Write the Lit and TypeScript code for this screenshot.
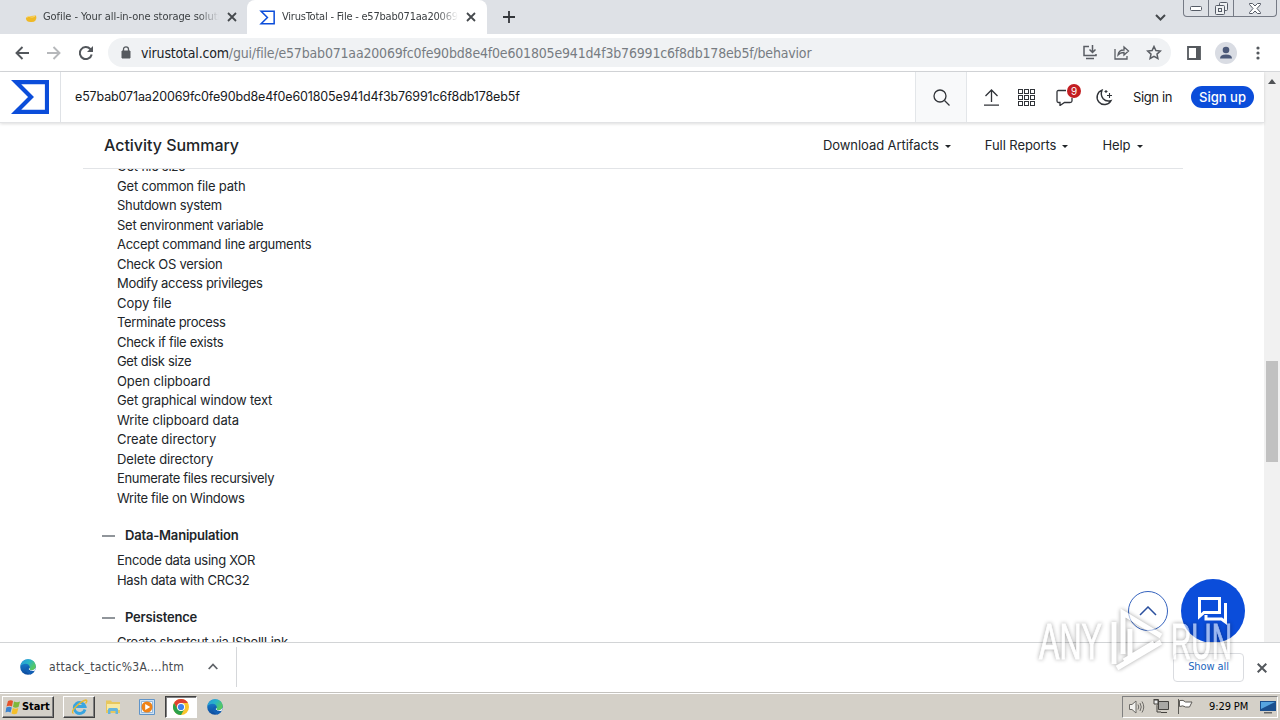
import { LitElement, css, html, svg } from 'lit';
import { customElement } from 'lit/decorators.js';

const HASH = 'e57bab071aa20069fc0fe90bd8e4f0e601805e941d4f3b76991c6f8db178eb5f';

// [label, letter spacing in px]
const CAPABILITIES: [string, number][] = [
    ['Get file size', -0.3],
    ['Get common file path', -0.18],
    ['Shutdown system', -0.3],
    ['Set environment variable', -0.27],
    ['Accept command line arguments', -0.28],
    ['Check OS version', -0.28],
    ['Modify access privileges', -0.33],
    ['Copy file', 0],
    ['Terminate process', -0.32],
    ['Check if file exists', -0.3],
    ['Get disk size', -0.33],
    ['Open clipboard', -0.07],
    ['Get graphical window text', -0.2],
    ['Write clipboard data', -0.1],
    ['Create directory', -0.03],
    ['Delete directory', -0.13],
    ['Enumerate files recursively', -0.34],
    ['Write file on Windows', -0.31],
];

const edgeIcon = (size: number) => html`
    <svg width=${size} height=${size} viewBox="0 0 16 16">
        <defs>
            <linearGradient id="eg" x1="0" y1="0" x2="1" y2=".6"><stop offset="0" stop-color="#2a96dc"/><stop offset=".5" stop-color="#28b4c8"/><stop offset="1" stop-color="#5acb58"/></linearGradient>
            <linearGradient id="eb" x1="0" y1="0" x2="0" y2="1"><stop offset="0" stop-color="#1b8ad8"/><stop offset="1" stop-color="#0d4a9c"/></linearGradient>
        </defs>
        <circle cx="8" cy="8" r="7.8" fill="url(#eb)"/>
        <path d="M.4 7.4C1 3 4.200 .2 8.200 .2c4.400 0 7.500 3.200 7.500 6.700 0 2.600-2 4.200-4.200 4.200-1.900 0-2.700-.6-2.700-1.100 0-.5.9-.8.9-2.200 0-1.500-1.600-3-4-3C3.300 4.800 1.300 5.700.4 7.400z" fill="url(#eg)"/>
        <path d="M8.800 10c.2 1 1.500 1.900 3 1.900 1.400 0 2.500-.5 3.100-.9-1.200 2.600-3 4-4.400 4.400-3-.6-4.800-3-4.500-5.600.2-1.300 1-2.200 2-2.600 1 .2 1.500.9 1.500 1.500 0 .6-.7.800-.7 1.300z" fill="#125fb4"/>
        <path d="M15.600 8.500c-.6 1.600-2.200 2.700-4.100 2.700-1.900 0-2.700-.6-2.700-1.100 0-.3.400-.6.600-1.100l1 2.700 3.900.4c.7-.8 1.200-2 1.300-3.600z" fill="#fff"/>
    </svg>`;

const vtIcon = (w: number, h: number, stroke: number) => html`
    <svg width=${w} height=${h} viewBox="0 0 38 34" fill="none" stroke="#0b4dda" stroke-width=${stroke}>
        <path d="M5 2.100h31v29.800H5L20 17z"/>
    </svg>`;

@customElement('vt-tabs')
class VtTabs extends LitElement {
    static styles = css`
        :host { display: flex; height: 34px; background: #dee1e6; font: 11px/34px 'DejaVu Sans Condensed', 'DejaVu Sans', sans-serif; color: #3c4043; }
        .tab { display: flex; align-items: center; width: 247px; box-sizing: border-box; padding: 0 10px 0 22px; }
        .active { width: 240px; padding: 0 9px 0 12px; background: #fff; border-radius: 8px 8px 0 0; }
        .title { width: 176px; margin: 0 8px 0 5px; overflow: hidden; white-space: nowrap; letter-spacing: -.07px; mask-image: linear-gradient(90deg, #000 155px, transparent 176px); }
        .active .title { margin-left: 7px; letter-spacing: -.22px; }
        svg { flex: none; display: block; }
        .plus { margin: 11px 0 0 16px; }
        .chevron { margin: 14px 17px 0 auto; }
        .controls { display: flex; height: 16px; margin-right: 3px; border: 1px solid #757a85; border-top: 0; border-radius: 0 0 4px 4px; }
        .controls span { display: grid; place-items: center; width: 24px; border-right: 1px solid #757a85; }
        .controls span:last-child { width: 42px; border: 0; }
    `;

    render() {
        const close = html`<svg width="10" height="10" viewBox="0 0 10 10" stroke="#45494d" stroke-width="1.800"><path d="M1 1l8 8M9 1l-8 8"/></svg>`;
        return html`
            <div class="tab">
                <svg width="16" height="16" viewBox="0 0 16 16"><path d="M4 10q-.500-2 2-2 .500-1.500 3-1l5-.500q1 2-.500 5-1.500 2-5 1.500-4 0-4.500-3" fill="#efb927"/><path d="M5 8q2-1.500 4 0 2 .500 4-1" fill="none" stroke="#f8d778"/></svg>
                <span class="title">Gofile - Your all-in-one storage solution</span>${close}
            </div>
            <div class="tab active">${vtIcon(16, 15, 3.6)}<span class="title">VirusTotal - File - ${HASH}</span>${close}</div>
            <svg class="plus" width="12" height="12" viewBox="0 0 12 12" stroke="#33363a" stroke-width="1.800"><path d="M6 0v12M0 6h12"/></svg>
            <svg class="chevron" width="11" height="7" viewBox="0 0 11 7" fill="none" stroke="#45494d" stroke-width="2"><path d="M1 1l4.500 4.500L10 1"/></svg>
            <div class="controls">
                <span><svg width="12" height="5" viewBox="0 0 12 5" fill="#fff" stroke="#555b66"><rect x=".5" y=".5" width="11" height="4" rx="1"/></svg></span>
                <span><svg width="13" height="13" viewBox="0 0 13 13" fill="#eef0f2" stroke="#555b66"><rect x="4.500" y=".5" width="8" height="8" rx="1"/><rect x=".5" y="3.500" width="9" height="9" rx="1"/><rect x="3.500" y="6.500" width="3" height="3"/></svg></span>
                <span><svg width="12" height="11" viewBox="0 0 12 11" fill="#fff" stroke="#555b66"><path d="M.5.500h3L6 3l2.500-2.500h3v1L8 5.500l3.500 4v1h-3L6 8l-2.500 2.500h-3v-1L4 5.500.500 1.500z"/></svg></span>
            </div>`;
    }
}

@customElement('vt-toolbar')
class VtToolbar extends LitElement {
    static styles = css`
        :host { display: flex; align-items: center; height: 37px; border-bottom: 1px solid #d5d7da; background: #fff; font: 14px/28px 'DejaVu Sans Condensed', 'DejaVu Sans', sans-serif; color: #777c82; }
        svg { display: block; flex: none; }
        .nav { display: flex; gap: 18px; padding: 0 15px 0 15px; }
        .url { display: flex; align-items: center; box-sizing: border-box; width: 1063px; height: 29px; padding: 0 9px 0 13px; border-radius: 15px; background: #f0f2f4; }
        .address { margin: 0 auto 0 10px; white-space: nowrap; letter-spacing: -.18px; }
        b { font-weight: normal; color: #202327; }
        .actions { display: flex; gap: 16px; }
        .panel { margin-left: 16px; }
        .avatar { margin-left: 14px; }
        .dots { margin-left: 19px; }
    `;

    render() {
        return html`
            <div class="nav">
                <svg width="14" height="14" viewBox="0 0 14 14" fill="none" stroke="#53575c" stroke-width="1.900"><path d="M14 7H1.500M7.500 1L1.500 7l6 6"/></svg>
                <svg width="14" height="14" viewBox="0 0 14 14" fill="none" stroke="#b6b8bb" stroke-width="1.900"><path d="M0 7h12.500M6.500 1l6 6-6 6"/></svg>
                <svg width="14" height="14" viewBox="0 0 14 14" fill="none" stroke="#53575c" stroke-width="2"><path d="M12.700 8.500A6 6 0 1 1 11.300 3L13 4.800"/><path d="M14 0v6H8z" fill="#53575c" stroke="none"/></svg>
            </div>
            <div class="url">
                <svg width="10" height="13" viewBox="0 0 10 13"><path d="M1 5h8v7H1z" fill="#565a5f" stroke="#565a5f"/><path d="M2.500 5V3.300a2.500 2.500 0 0 1 5 0V5" fill="none" stroke="#565a5f" stroke-width="1.300"/></svg>
                <span class="address"><b>virustotal.com</b>/gui/file/${HASH}/behavior</span>
                <div class="actions">
                    <svg width="16" height="15" viewBox="0 0 16 15" fill="none" stroke="#5a5e64" stroke-width="1.500"><path d="M7 1.500H2v9h12V9M4 13.500h8M10.500 0v7M7.500 4.500l3 3 3-3"/></svg>
                    <svg width="16" height="15" viewBox="0 0 16 15" fill="none" stroke="#5a5e64" stroke-width="1.300"><path d="M1 4v10h12v-3M4 10q.500-5 6-5V2l4.500 4L10 10V7.500q-4 0-6 2.500z"/></svg>
                    <svg width="16" height="15" viewBox="0 0 16 15" fill="none" stroke="#5a5e64" stroke-width="1.500"><path d="M8 1.500l1.900 4.100 4.400.500-3.300 3 .9 4.400L8 11.300l-3.900 2.200.9-4.400-3.300-3 4.400-.500z"/></svg>
                </div>
            </div>
            <svg class="panel" width="14" height="14" viewBox="0 0 14 14"><path d="M1 1h12v12H1z" fill="none" stroke="#55595e" stroke-width="1.800"/><path d="M9 1h4v12H9z" fill="#55595e"/></svg>
            <svg class="avatar" width="22" height="22" viewBox="0 0 22 22"><circle cx="11" cy="11" r="11" fill="#d9dce3"/><circle cx="11" cy="8" r="3.300" fill="#4b5878"/><path d="M5 16.500q0-4 6-4t6 4z" fill="#4b5878"/></svg>
            <svg class="dots" width="4" height="14" viewBox="0 0 4 14" fill="#55595e"><circle cx="2" cy="2" r="1.600"/><circle cx="2" cy="7" r="1.600"/><circle cx="2" cy="12" r="1.600"/></svg>`;
    }
}

@customElement('vt-header')
class VtHeader extends LitElement {
    static styles = css`
        :host { display: flex; align-items: center; height: 50px; background: #fff; border-bottom: 1px solid #e2e3e5; box-shadow: 0 1px 3px #0002; font: 13px/20px Inter, sans-serif; color: #17191c; position: relative; }
        svg { display: block; flex: none; }
        .logo { display: grid; place-items: center; width: 60px; height: 50px; border-right: 1px solid #dfe2e6; }
        .query { flex: 1; padding-left: 14px; font-size: 12.500px; letter-spacing: -.14px; }
        .search { display: grid; place-items: center; width: 50px; height: 50px; border: 1px solid #e3e6e9; border-width: 0 1px; background: #f8f9fa; }
        .icons { display: flex; align-items: center; gap: 21px; padding-left: 17px; }
        .upload { margin-right: -2px; }
        .comments { position: relative; }
        .badge { position: absolute; left: 11px; top: -5px; width: 14px; height: 14px; border-radius: 50%; background: #c31e22; color: #fff; font-size: 10px; line-height: 14px; text-align: center; }
        .signin { margin-left: 20px; letter-spacing: -.38px; white-space: nowrap; }
        .signup { width: 63px; height: 22px; margin: 0 10px 0 19px; border-radius: 11px; background: #0b4dda; color: #fff; line-height: 22px; text-align: center; font-weight: 500; }
    `;

    render() {
        const cells = [0.5, 6.5, 12.5];
        return html`
            <div class="logo">${vtIcon(38, 34, 4.2)}</div>
            <div class="query">${HASH}</div>
            <div class="search"><svg width="17" height="17" viewBox="0 0 17 17" fill="none" stroke="#303338" stroke-width="1.300"><circle cx="7" cy="7" r="6"/><path d="M11.500 11.500l5 5"/></svg></div>
            <div class="icons">
                <svg class="upload" width="15" height="17" viewBox="0 0 15 17" fill="none" stroke="#303338" stroke-width="1.300"><path d="M7.500 13V1M1.500 7l6-6 6 6M0 16.200h15"/></svg>
                <svg width="17" height="17" viewBox="0 0 17 17" fill="none" stroke="#303338">
                    ${cells.map(y => cells.map(x => svg`<rect x=${x} y=${y} width="4" height="4"/>`))}
                </svg>
                <div class="comments">
                    <svg width="18" height="17" viewBox="0 0 18 17" fill="none" stroke="#303338" stroke-width="1.300"><path d="M10 1.500H2.500q-1.500 0-1.500 1.500v9q0 1.500 1.500 1.500H4v3l4.500-3H14q2 0 2-1.500V9"/></svg>
                    <span class="badge">9</span>
                </div>
                <svg width="18" height="17" viewBox="0 0 18 17" fill="none" stroke="#303338" stroke-width="1.400"><path d="M7 1.200a7.400 7.400 0 1 0 9 10.500Q11 13 8.200 9.800 5.200 6 7 1.200z"/><path d="M14.500 4v5M12 6.500h5M11 1v3M9.500 2.500h3" stroke-width="1.100"/></svg>
            </div>
            <span class="signin">Sign in</span>
            <span class="signup">Sign up</span>`;
    }
}

@customElement('vt-activity')
class VtActivity extends LitElement {
    static styles = css`
        :host { display: block; height: 519px; overflow: hidden; background: #fff; font: 13px/19.500px Inter, sans-serif; color: #212529; }
        .bar { display: flex; align-items: center; height: 46px; box-sizing: border-box; width: 1100px; margin-left: 83px; padding: 1px 0 0 21px; border-bottom: 1px solid #e2e4e7; letter-spacing: -.07px; }
        .bar h2 { width: 719px; margin: 0; font-size: 16px; font-weight: 500; white-space: nowrap; letter-spacing: -.03px; }
        .item { display: flex; align-items: center; margin-right: 34px; gap: 6px; white-space: nowrap; }
        .item::after { content: ''; border: 3px solid transparent; border-top-color: currentColor; border-bottom: 0; }
        .body { height: 473px; overflow: hidden; }
        .list { margin-top: -12px; }
        .row { padding-left: 117px; height: 19.500px; white-space: nowrap; }
        .head { display: flex; align-items: center; gap: 10px; height: 20px; margin: 17.750px 0 5.250px 102px; font-weight: 600; letter-spacing: -.19px; }
        .head::before { content: ''; width: 13px; height: 2px; background: #90959a; }
    `;

    row([label, spacing]: [string, number]) {
        return html`<div class="row" style="letter-spacing: ${spacing}px">${label}</div>`;
    }

    render() {
        return html`
            <div class="bar">
                <h2>Activity Summary</h2>
                <span class="item">Download Artifacts</span>
                <span class="item">Full Reports</span>
                <span class="item">Help</span>
            </div>
            <div class="body">
                <div class="list">${CAPABILITIES.map(c => this.row(c))}</div>
                <div class="head">Data-Manipulation</div>
                ${this.row(['Encode data using XOR', -0.29])}
                ${this.row(['Hash data with CRC32', -0.3])}
                <div class="head">Persistence</div>
                ${this.row(['Create shortcut via IShellLink', -0.28])}
            </div>`;
    }
}

@customElement('vt-downloads')
class VtDownloads extends LitElement {
    static styles = css`
        :host { display: flex; align-items: center; height: 49px; border-top: 1px solid #d2d4d6; background: #fff; font: 12px/20px 'DejaVu Sans Condensed', 'DejaVu Sans', sans-serif; color: #45494d; }
        svg { display: block; flex: none; }
        .file { display: flex; align-items: center; width: 216px; height: 40px; margin-top: -2px; padding-left: 20px; border-right: 1px solid #d5d7da; }
        .name { width: 147px; margin: 0 12px 0 13px; white-space: nowrap; letter-spacing: .27px; }
        .all { width: 69px; height: 27px; margin: 0 13px 0 auto; border: 1px solid #dadce0; border-radius: 4px; color: #2266bd; font-size: 11px; line-height: 25px; text-align: center; letter-spacing: -.1px; }
        .close { margin-right: 13px; }
    `;

    render() {
        return html`
            <div class="file">
                ${edgeIcon(16)}
                <span class="name">attack_tactic%3A....htm</span>
                <svg width="10" height="7" viewBox="0 0 10 7" fill="none" stroke="#5f6368" stroke-width="1.800"><path d="M.7 6L5 1.500 9.300 6"/></svg>
            </div>
            <div class="all">Show all</div>
            <svg class="close" width="10" height="10" viewBox="0 0 10 10" stroke="#53575c" stroke-width="2"><path d="M.7.700l8.600 8.600M9.300.700L.700 9.300"/></svg>`;
    }
}

@customElement('vt-taskbar')
class VtTaskbar extends LitElement {
    static styles = css`
        :host { display: flex; align-items: center; height: 28px; box-sizing: border-box; padding: 1px 2px 1px; background: #d4d0c8; border-top: 1px solid #c4c2be; box-shadow: inset 0 1px #fff; font: 11px/20px 'DejaVu Sans Condensed', 'DejaVu Sans', sans-serif; color: #000; }
        svg { display: block; flex: none; }
        .start, .raised { border: 1px solid; border-color: #fff #404040 #404040 #fff; box-shadow: inset -1px -1px #808080; }
        .start { display: flex; align-items: center; gap: 1px; box-sizing: border-box; width: 52px; height: 22px; padding-left: 2px; font-weight: bold; letter-spacing: -.1px; }
        .app { display: grid; place-items: center; box-sizing: border-box; width: 32px; height: 22px; margin-right: 2px; }
        .raised { margin-left: 9px; }
        .pressed { border: 1px solid; border-color: #404040 #fff #fff #404040; box-shadow: inset 1px 1px #808080; background: #fff; }
        .tray { display: flex; align-items: center; box-sizing: border-box; width: 156px; height: 22px; margin-left: auto; padding: 0 1px 0 6px; border: 1px solid; border-color: #808080 #fff #fff #808080; }
        .tray svg { margin-right: 8px; }
        .clock { width: 43px; margin-left: 8px; margin-right: 8px; white-space: nowrap; letter-spacing: -.1px; }
        .tray svg.desk { margin: 0; }
    `;

    render() {
        return html`
            <div class="start">
                <svg width="16" height="16" viewBox="0 0 16 16"><path d="M3 2q3-1.500 5 0L7 7.500Q4.500 6 1.500 7.500z" fill="#e5522a"/><path d="M9 2.500q3 1.500 6 0l-1.500 5.500q-3 1.500-5.500 0z" fill="#7fb73b"/><path d="M1.300 8.500q3-1.500 5.500 0L5.500 13.500q-2.500-1.500-5 0z" fill="#3b83cf"/><path d="M7.800 9q3 1.500 5.500 0L12 14.500q-3 1.500-5.500 0z" fill="#f5bf29"/></svg>
                Start
            </div>
            <div class="app raised"><svg width="17" height="17" viewBox="0 0 17 17" fill="none"><path d="M14 11.500A5.500 5.500 0 1 1 14 8.500H5" stroke="#3aa5e0" stroke-width="2.800"/><path d="M2.500 15.500Q-.5 14 5 8.500T15 2q2 .500-.500 3.500" stroke="#eab92c" stroke-width="1.300"/></svg></div>
            <div class="app"><svg width="16" height="16" viewBox="0 0 16 16"><path d="M1 3V1.500h5L7 3h8v11H1z" fill="#e7c75e"/><path d="M2 5h13v6H2z" fill="#f8e9a2"/><path d="M3 15v-4.500q0-1.500 1.500-1.500h7q1.500 0 1.500 1.500V15h-2.500v-3h-5v3z" fill="#65b5dd"/></svg></div>
            <div class="app"><svg width="16" height="16" viewBox="0 0 16 16"><path d="M.5.500h15v15H.500z" fill="#cfe2f3" stroke="#5f94c9"/><path d="M2.500 2.500h11v11h-11z" fill="#f8fbfd" stroke="#93b7da"/><circle cx="8" cy="8" r="5.500" fill="#ef8318"/><path d="M6.200 5v6l5-3z" fill="#fff"/></svg></div>
            <div class="app pressed"><svg width="16" height="16" viewBox="0 0 16 16"><circle cx="8" cy="8" r="8" fill="#fbc52d"/><path d="M1.070 4A8 8 0 0 1 14.930 4H8L4.540 10z" fill="#df4132"/><path d="M1.070 4A8 8 0 0 0 8 16L11.460 10 8 12 4.540 10z" fill="#2ba14b"/><circle cx="8" cy="8" r="4" fill="#fff"/><circle cx="8" cy="8" r="3.100" fill="#4082ec"/></svg></div>
            <div class="app">${edgeIcon(16)}</div>
            <div class="tray">
                <svg width="16" height="14" viewBox="0 0 16 14" fill="#f2f1ee" stroke="#6d6b67"><path d="M.5 4.500H3L7 1v12L3 9.500H.500z"/><path d="M9 4.500q1.500 2.500 0 5M11 3q2.500 4 0 8M13 1.500q3.500 5.500 0 11" fill="none"/></svg>
                <svg width="16" height="15" viewBox="0 0 16 15" fill="#a9a8a4" stroke="#45433f"><path d="M5.500 2.500h10v8h-10zM8 13.500h6"/><path d="M.5.500h5V5L4 6.500V13h4" fill="none"/><path d="M1 1h4v4H1z" fill="#eee"/></svg>
                <svg width="16" height="15" viewBox="0 0 16 15" fill="#fff" stroke="#5d5b57"><path d="M1.500 0v15" /><path d="M2.500 1.500q4-1 6 1.500h6.500l-2.500 5H8.500Q6 6 2.500 7.500z"/></svg>
                <span class="clock">9:29 PM</span>
                <svg class="desk" width="16" height="14" viewBox="0 0 16 14"><path d="M0 1h16v10H0z" fill="#1b4f8e"/><path d="M1 2h14L1 9z" fill="#57a4df"/><path d="M4 12h8v1.500H4z" fill="#666"/></svg>
            </div>`;
    }
}

@customElement('app-root')
class AppRoot extends LitElement {
    static styles = css`
        :host { display: flex; flex-direction: column; position: relative; width: 1280px; height: 720px; overflow: hidden; background: #fff; }
        .page { display: flex; height: 570px; }
        .content { width: 1264px; }
        .scroll { display: flex; flex-direction: column; align-items: center; width: 16px; background: #f1f1f1; }
        .arrow { margin-top: 7px; border: 4px solid transparent; border-top: 0; border-bottom: 5px solid #505356; }
        .thumb { width: 12px; height: 101px; margin-top: 277px; background: #c1c1c1; }
        .top, .chat { position: absolute; display: grid; place-items: center; border-radius: 50%; }
        .top { left: 1128px; top: 591px; width: 38px; height: 38px; border: 1px solid #3563be; background: #fff; }
        .chat { left: 1181px; top: 579px; width: 64px; height: 64px; background: #0b4dda; clip-path: inset(0 0 1px 0); }
        .mark { position: absolute; left: 1030px; top: 600px; filter: drop-shadow(0 0 2px #0009); opacity: .6; pointer-events: none; }
    `;

    render() {
        return html`
            <vt-tabs></vt-tabs>
            <vt-toolbar></vt-toolbar>
            <div class="page">
                <div class="content"><vt-header></vt-header><vt-activity></vt-activity></div>
                <div class="scroll"><div class="arrow"></div><div class="thumb"></div></div>
            </div>
            <vt-downloads></vt-downloads>
            <vt-taskbar></vt-taskbar>
            <div class="top"><svg width="18" height="10" viewBox="0 0 18 10" fill="none" stroke="#2a4f9e" stroke-width="1.500"><path d="M1 9l8-8 8 8"/></svg></div>
            <div class="chat"><svg width="32" height="30" viewBox="0 0 32 30" fill="none" stroke="#fff" stroke-width="3"><path d="M2.500 2.500h20v14H7l-4.500 4z"/><path d="M28.500 7v19l-4-3H9v-4" /></svg></div>
            <svg class="mark" width="215" height="80" viewBox="0 0 215 80" fill="#fff" stroke="#fff" font-family="Liberation Sans Narrow, Liberation Sans, sans-serif" font-size="50">
                <text x="9" y="59" textLength="63" lengthAdjust="spacingAndGlyphs">ANY</text>
                <text x="141" y="59" textLength="61" lengthAdjust="spacingAndGlyphs">RUN</text>
                <path d="M84 22v42M93 54V13l38 23M100 57V29M87 68l44-26M94 61l30-18" fill="none" stroke-width="5"/>
            </svg>`;
    }
}
